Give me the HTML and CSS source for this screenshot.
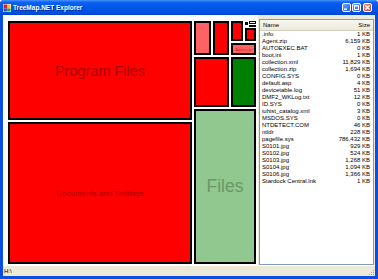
FILE: index.html
```html
<!DOCTYPE html>
<html lang="en">
<head>
    <meta charset="UTF-8">
    <title>TreeMap.NET Explorer</title>
    <link rel="stylesheet" href="styles.css">
</head>
<body>

    <div class="window">
        <div class="titlebar">
            <svg class="app-icon" width="8" height="8" viewBox="0 0 8 8">
                <rect width="8" height="8" fill="#fff"/>
                <rect x="0.5" y="0.5" width="4" height="4" fill="#e02020"/>
                <rect x="4.5" y="0.5" width="3" height="4" fill="#f2c21a"/>
                <rect x="0.5" y="4.5" width="4" height="3" fill="#2450e0"/>
                <rect x="4.5" y="4.5" width="3" height="3" fill="#2fa030"/>
            </svg>
            <span class="title">TreeMap.NET Explorer</span>
            <div class="caption-buttons">
                <div class="cap-btn">
                    <svg width="7" height="7" viewBox="0 0 7 7"><rect x="1" y="4.5" width="3" height="1.5" fill="#fff"/></svg>
                </div>
                <div class="cap-btn">
                    <svg width="7" height="7" viewBox="0 0 7 7"><rect x="1.5" y="1.5" width="4" height="4" fill="none" stroke="#fff" stroke-width="1"/><rect x="1" y="1" width="5" height="1.5" fill="#fff"/></svg>
                </div>
                <div class="cap-btn close">
                    <svg width="7" height="7" viewBox="0 0 7 7"><path d="M1.5 1.5 L5.5 5.5 M5.5 1.5 L1.5 5.5" stroke="#fff" stroke-width="1.3"/></svg>
                </div>
            </div>
        </div>

        <div class="window-body">
            <div class="main">
                <!-- treemap -->
                <div class="treemap">
                    <div class="col col-left">
                        <div class="tile red tile-program">Program Files</div>
                        <div class="tile red tile-docs">Documents and Settings</div>
                    </div>
                    <div class="col col-right">
                        <div class="row row-top">
                            <div class="tile pink w17"></div>
                            <div class="tile red w16"></div>
                            <div class="col stack">
                                <div class="row stack-top">
                                    <div class="tile red w12"></div>
                                    <div class="col mini">
                                        <div class="bits">
                                            <div class="bit-black"></div>
                                            <div class="bit-stack">
                                                <div class="bit"></div>
                                                <div class="bit"></div>
                                            </div>
                                        </div>
                                        <div class="tile red grow"></div>
                                    </div>
                                </div>
                                <div class="tile pink grow tiny-label">Agent.zip</div>
                            </div>
                        </div>
                        <div class="row row-mid">
                            <div class="tile red w35"></div>
                            <div class="tile green grow"></div>
                        </div>
                        <div class="tile lightgreen tile-files">Files</div>
                    </div>
                </div>

                <!-- file list -->
                <div class="list">
                    <div class="list-header">
                        <span>Name</span><span>Size</span>
                    </div>
                    <div class="list-row"><span>.info</span><span>1 KB</span></div>
                    <div class="list-row"><span>Agent.zip</span><span>6,159 KB</span></div>
                    <div class="list-row"><span>AUTOEXEC.BAT</span><span>0 KB</span></div>
                    <div class="list-row"><span>boot.ini</span><span>1 KB</span></div>
                    <div class="list-row"><span>collection.xml</span><span>11,829 KB</span></div>
                    <div class="list-row"><span>collection.zip</span><span>1,694 KB</span></div>
                    <div class="list-row"><span>CONFIG.SYS</span><span>0 KB</span></div>
                    <div class="list-row"><span>default.asp</span><span>4 KB</span></div>
                    <div class="list-row"><span>devicetable.log</span><span>51 KB</span></div>
                    <div class="list-row"><span>DMF2_WKLog.txt</span><span>12 KB</span></div>
                    <div class="list-row"><span>ID.SYS</span><span>0 KB</span></div>
                    <div class="list-row"><span>iuhist_catalog.xml</span><span>3 KB</span></div>
                    <div class="list-row"><span>MSDOS.SYS</span><span>0 KB</span></div>
                    <div class="list-row"><span>NTDETECT.COM</span><span>46 KB</span></div>
                    <div class="list-row"><span>ntldr</span><span>228 KB</span></div>
                    <div class="list-row"><span>pagefile.sys</span><span>786,432 KB</span></div>
                    <div class="list-row"><span>S0101.jpg</span><span>929 KB</span></div>
                    <div class="list-row"><span>S0102.jpg</span><span>524 KB</span></div>
                    <div class="list-row"><span>S0103.jpg</span><span>1,268 KB</span></div>
                    <div class="list-row"><span>S0104.jpg</span><span>1,094 KB</span></div>
                    <div class="list-row"><span>S0106.jpg</span><span>1,366 KB</span></div>
                    <div class="list-row"><span>Stardock Central.lnk</span><span>1 KB</span></div>
                </div>
            </div>

            <div class="statusbar">
                <span>H:\</span>
                <svg class="grip" width="8" height="8" viewBox="0 0 8 8">
                    <rect x="6" y="2" width="1" height="1" fill="#a8a595"/>
                    <rect x="4" y="4" width="1" height="1" fill="#a8a595"/>
                    <rect x="6" y="4" width="1" height="1" fill="#a8a595"/>
                    <rect x="2" y="6" width="1" height="1" fill="#a8a595"/>
                    <rect x="4" y="6" width="1" height="1" fill="#a8a595"/>
                    <rect x="6" y="6" width="1" height="1" fill="#a8a595"/>
                </svg>
            </div>
        </div>
    </div>

</body>
</html>
```

FILE: styles.css
```css
* {
    box-sizing: border-box;
}

body {
    margin: 0;
    font-family: "Liberation Sans", Arial, sans-serif;
    background: #fff;
    width: 378px;
    height: 279px;
    overflow: hidden;
}

.window {
    width: 378px;
    height: 279px;
    display: flex;
    flex-direction: column;
    background: #0a4fe2;
    border-radius: 4px 4px 0 0;
    overflow: hidden;
}

/* Title bar */
.titlebar {
    height: 15px;
    display: flex;
    align-items: center;
    padding: 0 6px 0 3px;
    color: white;
    background: linear-gradient(#4a94fb 0%, #0c62f2 15%, #0057e8 45%, #0052e2 80%, #0044cc 100%);
}

.app-icon {
    margin-right: 2px;
}

.title {
    flex: 1;
    font-size: 6.5px;
    font-weight: 700;
    text-shadow: 1px 1px 0 #0b2a8c;
}

.caption-buttons {
    display: flex;
    gap: 1px;
}

.cap-btn {
    width: 9px;
    height: 9px;
    border: 1px solid #fff;
    border-radius: 2px;
    background: linear-gradient(135deg, #6aa4ff, #2261ea);
    display: flex;
    align-items: center;
    justify-content: center;
}

.cap-btn.close {
    margin-left: 1px;
    background: linear-gradient(135deg, #f3906f, #d6431d);
}

/* Body */
.window-body {
    flex: 1;
    margin: 0 3px 3px;
    background: #ece9d8;
    display: flex;
    flex-direction: column;
}

.main {
    height: 250px;
    display: flex;
}

/* Treemap */
.treemap {
    width: 255px;
    background: #fff;
    padding: 6px 2px 1px 5px;
    display: flex;
    gap: 2px;
}

.col {
    display: flex;
    flex-direction: column;
    gap: 2px;
}

.row {
    display: flex;
    gap: 2px;
}

.col-left {
    width: 184px;
}

.col-right {
    width: 62px;
}

.tile {
    border: 2px solid #000;
    display: flex;
    align-items: center;
    justify-content: center;
    overflow: hidden;
    white-space: nowrap;
}

.red {
    background: #ff0000;
    color: #aa0000;
}

.pink {
    background: #ff6262;
    color: #c42a2a;
}

.green {
    background: #008000;
}

.lightgreen {
    background: #90c890;
    color: #689868;
}

.grow {
    flex: 1;
}

.tile-program {
    height: 99px;
    font-size: 14.5px;
}

.tile-docs {
    flex: 1;
    font-size: 8px;
}

.tile-files {
    flex: 1;
    font-size: 17.5px;
}

.row-top {
    height: 34px;
}

.row-mid {
    height: 50px;
}

.w17 { width: 17px; }
.w16 { width: 16px; }
.w12 { width: 12px; }
.w35 { width: 35px; }

.stack {
    width: 25px;
}

.stack-top {
    height: 20px;
}

.mini {
    width: 11px;
    gap: 1px;
}

.bits {
    height: 6px;
    display: flex;
    gap: 1px;
}

.bit-black {
    width: 3px;
    height: 3px;
    margin-top: 1px;
    background: #000;
}

.bit-stack {
    flex: 1;
    display: flex;
    flex-direction: column;
    gap: 1px;
}

.bit {
    flex: 1;
    border: 1px solid #000;
    background: #fff;
}

.tiny-label {
    font-size: 4px;
}

/* File list */
.list {
    width: 115px;
    margin: 4px 1px 0 1px;
    border: 1px solid #7f9db9;
    background: #fff;
    font-size: 6px;
    color: #000;
}

.list-header {
    height: 11px;
    display: flex;
    align-items: center;
    justify-content: space-between;
    padding: 0 3px;
    background: linear-gradient(#f8f7f0, #ebe9da);
    border-bottom: 1px solid #d4d0c0;
}

.list-row {
    height: 7px;
    line-height: 7px;
    display: flex;
    justify-content: space-between;
    padding: 0 3px 0 2px;
    white-space: nowrap;
}

/* Status bar */
.statusbar {
    height: 11px;
    display: flex;
    align-items: center;
    justify-content: space-between;
    padding: 0 0 0 1px;
    font-size: 6px;
    border-top: 1px solid #fff;
}

.grip {
    align-self: flex-end;
}
```
